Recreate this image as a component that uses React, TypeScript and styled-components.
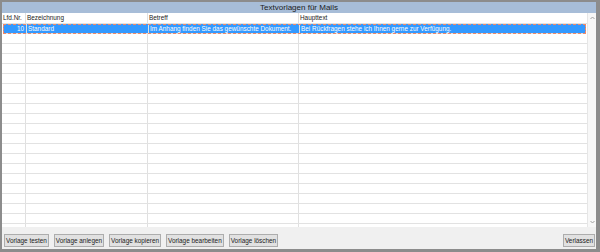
import React from "react";
import styled, { createGlobalStyle } from "styled-components";

const GlobalStyle = createGlobalStyle`
  html, body {
    margin: 0;
    padding: 0;
    background: #f0f0f0;
  }
`;

const Window = styled.div`
  box-sizing: border-box;
  width: 600px;
  height: 252px;
  display: flex;
  flex-direction: column;
  background: #f0f0f0;
  border-style: solid;
  border-color: #8c8c8c;
  border-width: 2px 4px 3px 2px;
  font-family: "Liberation Sans", Arial, sans-serif;
  color: #222;
  overflow: hidden;
`;

const TitleBar = styled.div`
  height: 11px;
  line-height: 11px;
  background: #a7bdd8;
  text-align: center;
  font-size: 8px;
  color: #1c1c1c;
`;

const GridArea = styled.div`
  height: 214px;
  display: flex;
  background: #fff;
  overflow: hidden;
`;

const Table = styled.div`
  flex: 1;
  display: flex;
  flex-direction: column;
  overflow: hidden;
`;

const Row = styled.div<{ $selected?: boolean; $header?: boolean }>`
  flex: none;
  box-sizing: border-box;
  height: ${(p) => (p.$header ? 11 : 10)}px;
  display: grid;
  grid-template-columns: 24px 122px 151px 1fr;
  border-bottom: 1px solid #e2e2e2;
  background: ${(p) => (p.$selected ? "#3399ff" : "#fff")};
  color: ${(p) => (p.$selected ? "#fff" : "#222")};
  outline: ${(p) => (p.$selected ? "1px dashed #f08a6a" : "none")};
  outline-offset: -1px;
  margin-left: ${(p) => (p.$selected ? "1px" : "0")};
  margin-right: ${(p) => (p.$selected ? "1px" : "0")};
`;

const Cell = styled.div<{ $right?: boolean }>`
  box-sizing: border-box;
  border-right: 1px solid #e0e0e0;
  font-size: 6.4px;
  line-height: 9px;
  padding: 0 ${(p) => (p.$right ? "2px" : "1px")} 0 1px;
  text-align: ${(p) => (p.$right ? "right" : "left")};
  white-space: nowrap;
  overflow: hidden;
  &:last-child {
    border-right: none;
  }
`;

const Scrollbar = styled.div`
  width: 9px;
  box-sizing: border-box;
  border-left: 1px solid #e6e6e6;
  background: #f7f7f7;
  display: flex;
  flex-direction: column;
  justify-content: space-between;
  align-items: center;
  padding: 3px 0 3px;
`;

const Arrow = styled.svg`
  width: 5px;
  height: 4px;
`;

const ButtonBar = styled.div`
  flex: 1;
  display: flex;
  align-items: flex-start;
  gap: 5px;
  padding: 7px 1px 0 2px;
`;

const Button = styled.button<{ $end?: boolean }>`
  height: 13px;
  box-sizing: border-box;
  padding: 0 1px;
  margin: 0;
  margin-left: ${(p) => (p.$end ? "auto" : "0")};
  background: #e1e1e1;
  border: 1px solid #adadad;
  font-family: "Liberation Sans", Arial, sans-serif;
  font-size: 6.4px;
  line-height: 11px;
  color: #222;
`;

const headers = ["Lfd.Nr.", "Bezeichnung", "Betreff", "Haupttext"];

const templates = [
  {
    nr: 10,
    name: "Standard",
    subject: "Im Anhang finden Sie das gewünschte Dokument.",
    body: "Bei Rückfragen stehe ich Ihnen gerne zur Verfügung.",
  },
];

const buttons = [
  "Vorlage testen",
  "Vorlage anlegen",
  "Vorlage kopieren",
  "Vorlage bearbeiten",
  "Vorlage löschen",
];

const EMPTY_ROWS = 20;

export default function App() {
  return (
    <>
      <GlobalStyle />
      <Window>
        <TitleBar>Textvorlagen für Mails</TitleBar>
        <GridArea>
          <Table>
            <Row $header>
              {headers.map((h) => (
                <Cell key={h}>{h}</Cell>
              ))}
            </Row>
            {templates.map((t, i) => (
              <Row key={t.nr} $selected={i === 0}>
                <Cell $right>{t.nr}</Cell>
                <Cell>{t.name}</Cell>
                <Cell>{t.subject}</Cell>
                <Cell>{t.body}</Cell>
              </Row>
            ))}
            {Array.from({ length: EMPTY_ROWS }).map((_, i) => (
              <Row key={"e" + i}>
                <Cell />
                <Cell />
                <Cell />
                <Cell />
              </Row>
            ))}
          </Table>
          <Scrollbar>
            <Arrow viewBox="0 0 5 4">
              <path d="M0.5 3 L2.5 1 L4.5 3" fill="none" stroke="#a0a0a0" strokeWidth="1" />
            </Arrow>
            <Arrow viewBox="0 0 5 4">
              <path d="M0.5 1 L2.5 3 L4.5 1" fill="none" stroke="#a0a0a0" strokeWidth="1" />
            </Arrow>
          </Scrollbar>
        </GridArea>
        <ButtonBar>
          {buttons.map((b) => (
            <Button key={b}>{b}</Button>
          ))}
          <Button $end>Verlassen</Button>
        </ButtonBar>
      </Window>
    </>
  );
}
